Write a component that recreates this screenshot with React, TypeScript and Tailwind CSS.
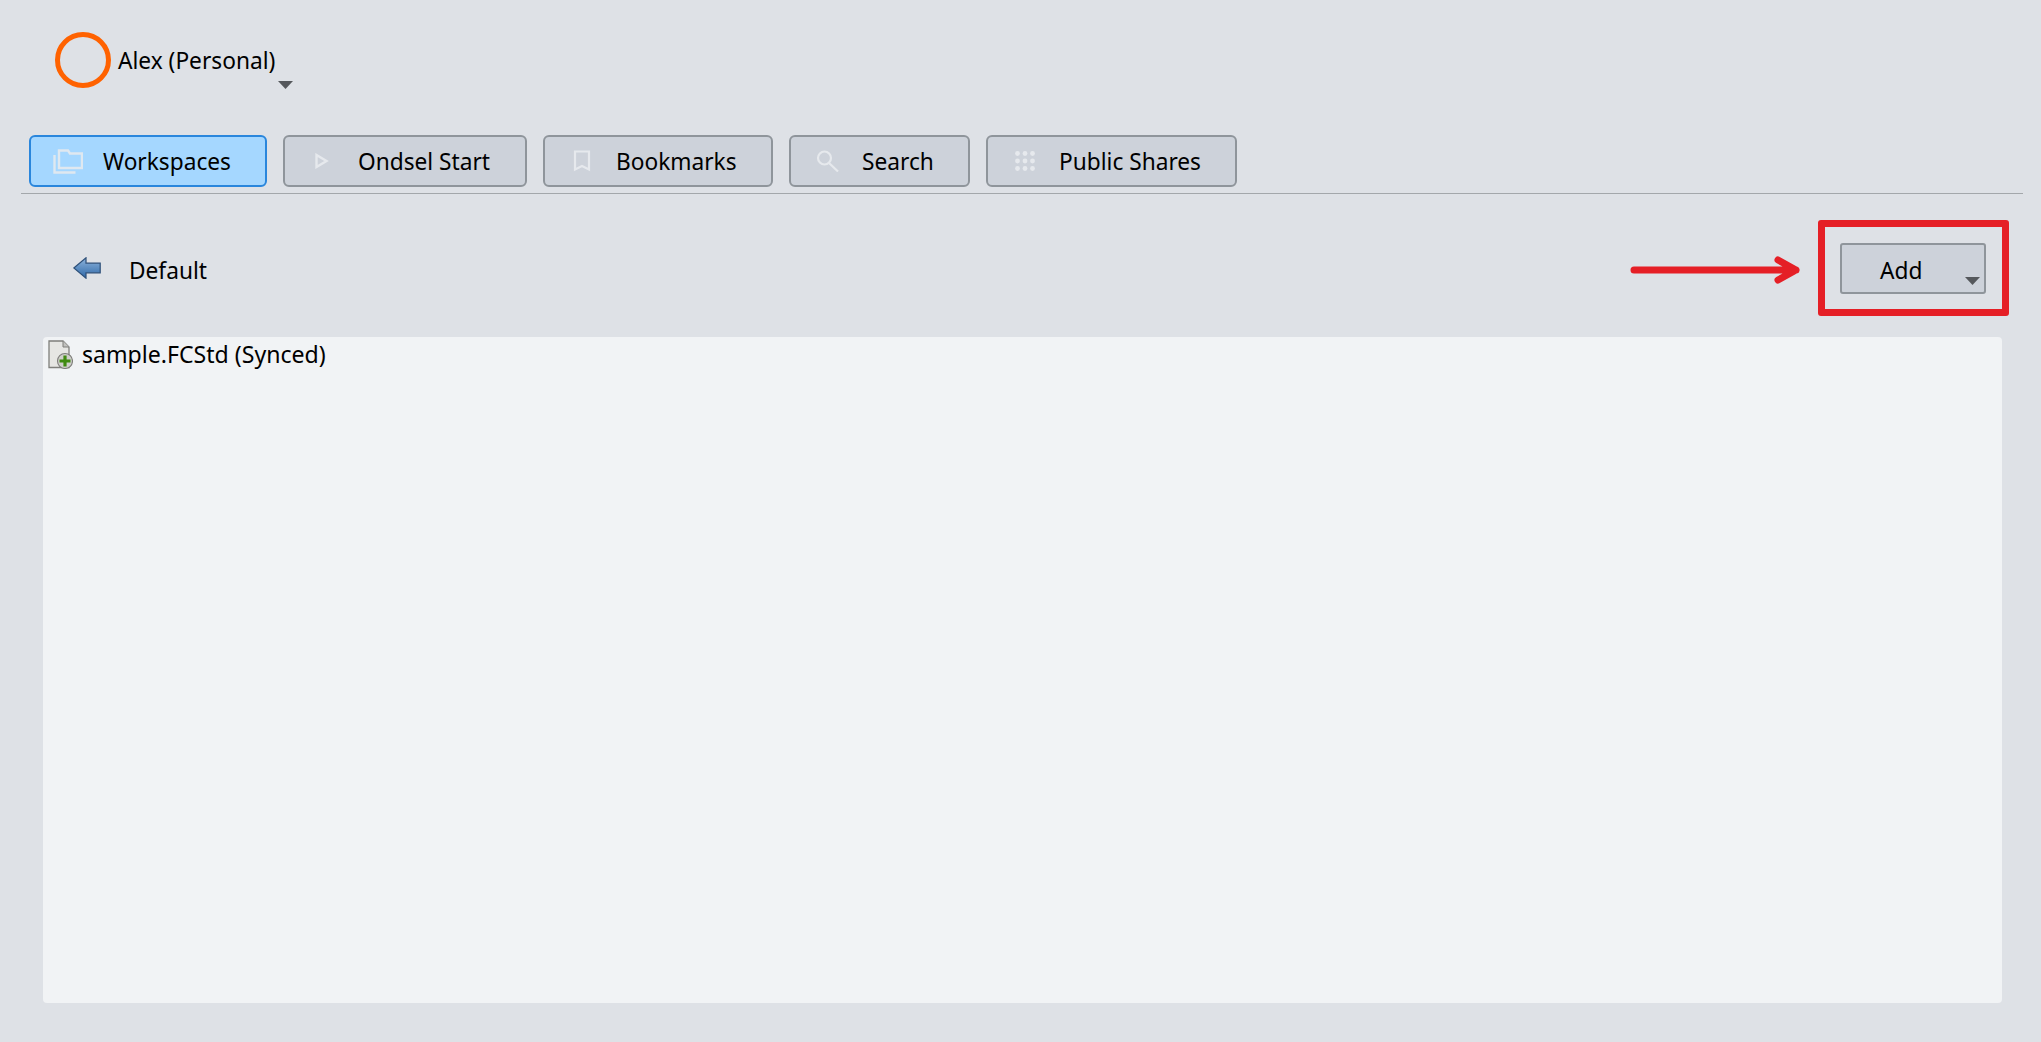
import React from "react";

const tabBase = "flex h-[52px] items-center rounded-[6px] border-2 text-[22.7px] text-black";

function FolderIcon() {
  return (
    <svg width="30" height="26" viewBox="0 0 30 26" fill="none" stroke="#dfe8f0" strokeWidth="2.4" className="shrink-0">
      <path d="M1.5 7v17.5h21" />
      <path d="M6 20V2.5h9l2 3h12V20z" />
    </svg>
  );
}

function PlayIcon() {
  return (
    <svg width="14" height="16" viewBox="0 0 14 16" fill="none" stroke="#e6e9ed" strokeWidth="2.4" className="shrink-0">
      <path d="M1.5 2v12l10-6z" />
    </svg>
  );
}

function BookmarkIcon() {
  return (
    <svg width="18" height="22" viewBox="0 0 18 22" fill="none" stroke="#e6e9ed" strokeWidth="2.2" className="shrink-0">
      <path d="M2 1.5h14v18l-7-3.5-7 3.5z" />
    </svg>
  );
}

function SearchIcon() {
  return (
    <svg width="23" height="22" viewBox="0 0 23 22" fill="none" stroke="#e6e9ed" strokeWidth="2.2" className="shrink-0">
      <circle cx="8.5" cy="8" r="6.5" />
      <path d="M13 13l9 8.5" />
    </svg>
  );
}

function GridIcon() {
  const dots = [2.5, 10, 17.5];
  return (
    <svg width="20" height="20" viewBox="0 0 20 20" fill="#e6e9ed" className="shrink-0">
      {dots.map((y) => dots.map((x) => <circle key={`${x}-${y}`} cx={x} cy={y} r="2.4" />))}
    </svg>
  );
}

function Caret() {
  return (
    <svg width="15" height="8" viewBox="0 0 15 8" className="shrink-0">
      <path d="M0 0h15l-7.5 8z" fill="#55585c" />
    </svg>
  );
}

function BackArrow() {
  return (
    <svg width="28" height="22" viewBox="0 0 28 22">
      <defs>
        <linearGradient id="back" x1="0" y1="0" x2="0" y2="1">
          <stop offset="0" stopColor="#8db4dc" />
          <stop offset="1" stopColor="#2f68a8" />
        </linearGradient>
      </defs>
      <path d="M0.8 11L13 0.8v5.4h14.2v9.6H13v5.4z" fill="url(#back)" stroke="#2d4f78" strokeWidth="1.2" />
    </svg>
  );
}

function FileIcon() {
  return (
    <svg width="25" height="29" viewBox="0 0 25 29" className="shrink-0">
      <path d="M1 1h14l6 6v20.5H1z" fill="#e6e6e3" stroke="#7f7f7b" strokeWidth="1.3" />
      <path d="M15 1v6h6" fill="#c2c2bf" stroke="#7f7f7b" strokeWidth="1" />
      <circle cx="17" cy="21" r="7.5" fill="#cfcfca" stroke="#7d7d79" strokeWidth="1.1" />
      <path d="M17 15.5v11M11.5 21h11" stroke="#3f8a10" strokeWidth="3.2" />
    </svg>
  );
}

const tabs = [
  { label: "Ondsel Start", icon: <PlayIcon />, width: "w-[244px]", iconBox: "w-[43px] pl-[30px]", gap: "ml-[30px]" },
  { label: "Bookmarks", icon: <BookmarkIcon />, width: "w-[230px]", iconBox: "w-[48px] pl-[28px]", gap: "ml-[23px]" },
  { label: "Search", icon: <SearchIcon />, width: "w-[181px]", iconBox: "w-[50px] pl-[25px]", gap: "ml-[21px]" },
  { label: "Public Shares", icon: <GridIcon />, width: "w-[251px]", iconBox: "w-[49px] pl-[27px]", gap: "ml-[22px]" },
];

export default function App() {
  return (
    <div className="relative flex h-[1042px] w-full flex-col overflow-hidden bg-[#dee1e6] font-['Noto_Sans',sans-serif]">
      {/* account */}
      <div className="flex h-[135px] items-start pl-[55px] pt-[32px]">
        <div className="h-[56px] w-[56px] rounded-full border-[5px] border-[#ff6200]" />
        <span className="ml-[7px] mt-[14px] text-[22.7px] leading-[30px] text-black">Alex (Personal)</span>
        <div className="ml-[3px] mt-[49px]">
          <Caret />
        </div>
      </div>

      {/* tabs */}
      <div className="flex gap-[16px] pl-[29px]">
        <button className={`${tabBase} w-[238px] border-[#2a86dc] bg-[#a5d7ff]`}>
          <span className="ml-[22px]"><FolderIcon /></span>
          <span className="ml-[20px] pt-[2px]">Workspaces</span>
        </button>
        {tabs.map((t) => (
          <button key={t.label} className={`${tabBase} ${t.width} border-[#8f959b] bg-[#cdd2da]`}>
            <span className={`shrink-0 ${t.iconBox}`}>{t.icon}</span>
            <span className={`${t.gap} pt-[2px]`}>{t.label}</span>
          </button>
        ))}
      </div>
      <div className="ml-[21px] mr-[18px] mt-[6px] h-px bg-[#a3a7ab]" />

      {/* folder bar */}
      <div className="flex h-[143px] items-center justify-between pl-[73px] pr-[55px] pt-[6px]">
        <div className="flex items-center">
          <BackArrow />
          <span className="ml-[28px] pt-[5px] text-[22.7px] text-black">Default</span>
        </div>
        <button className="relative flex h-[51px] w-[146px] items-center rounded-[3px] border-2 border-[#8f959b] bg-[#cdd2da] pl-[38px] pt-[5px] text-[22.7px] text-black">
          Add
          <span className="absolute bottom-[7px] right-[4px] flex">
            <Caret />
          </span>
        </button>
      </div>

      {/* file list */}
      <div className="ml-[43px] mr-[39px] h-[666px] rounded-[4px] bg-[#f1f3f5] pl-[5px] pt-[2px]">
        <div className="flex items-center">
          <FileIcon />
          <span className="ml-[9px] text-[23.1px] leading-[30px] text-black">sample.FCStd (Synced)</span>
        </div>
      </div>

      {/* annotation */}
      <div className="absolute left-[1818px] top-[220px] h-[96px] w-[191px] rounded-[3px] border-[7px] border-[#e51f26]" />
      <svg className="absolute left-[1628px] top-[254px]" width="175" height="32" viewBox="0 0 175 32" fill="none" stroke="#e51f26" strokeWidth="7" strokeLinecap="round" strokeLinejoin="round">
        <path d="M6 16h162M150 6l18 10-18 10" />
      </svg>
    </div>
  );
}
